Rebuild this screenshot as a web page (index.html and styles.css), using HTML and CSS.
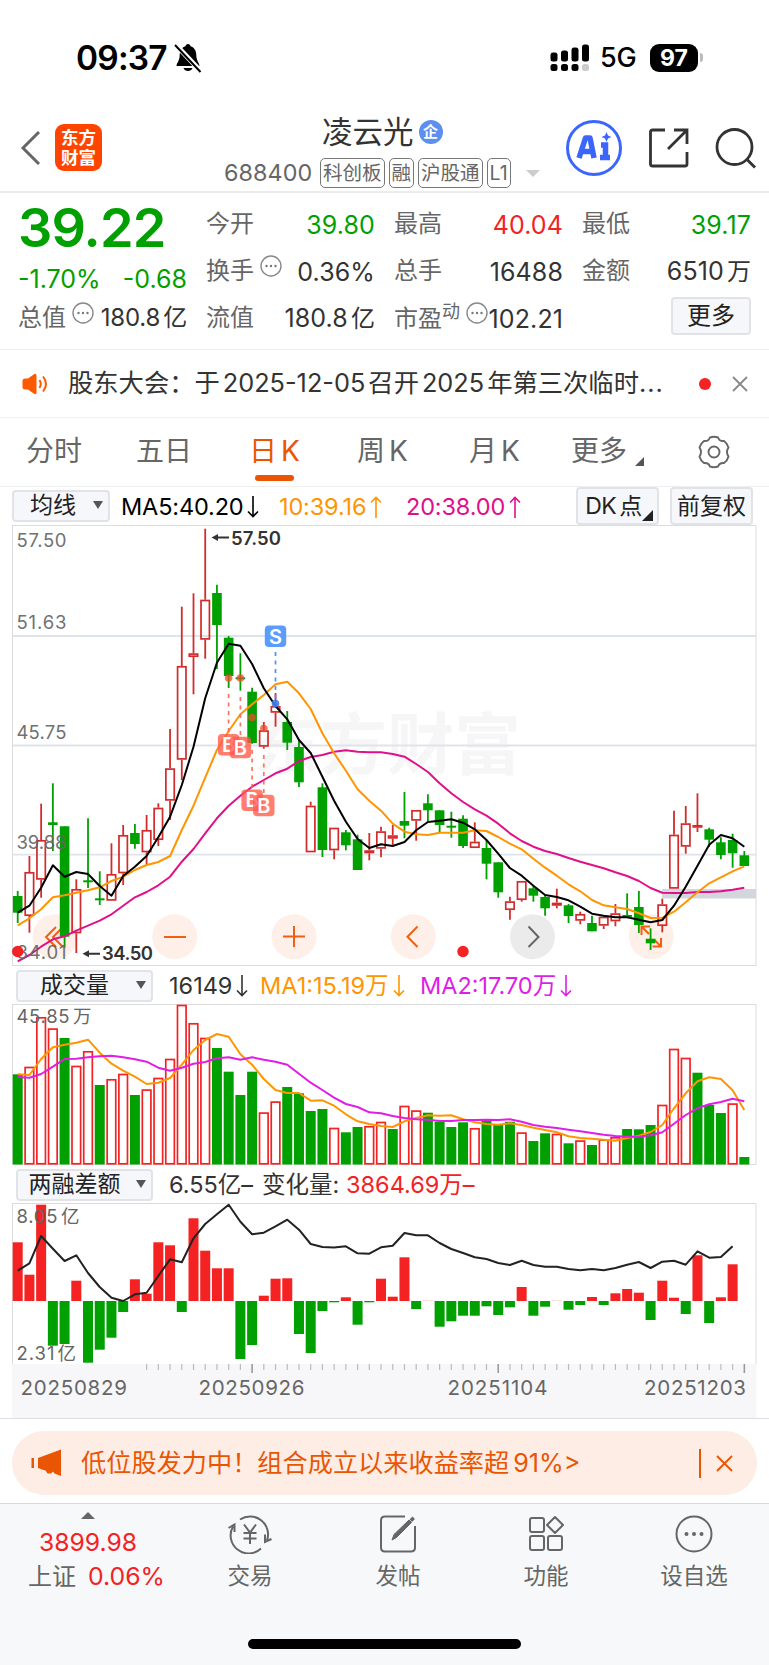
FILE: index.html
```
<!DOCTYPE html>
<html lang="zh-CN">
<head>
  <meta charset="UTF-8">
  <meta name="viewport" content="width=device-width, initial-scale=1">
  <title>凌云光 688400</title>
  <link rel="stylesheet" href="styles.css">
</head>
<body>
  <!-- shared icons -->
  <svg class="defs" width="0" height="0">
    <symbol id="down" viewBox="0 0 12 22"><path d="M6 0V20M1 15.5L6 20.5L11 15.5" fill="none" stroke="currentColor" stroke-width="1.6"/></symbol>
    <symbol id="up" viewBox="0 0 12 22"><path d="M6 22V2M1 6.5L6 1.5L11 6.5" fill="none" stroke="currentColor" stroke-width="1.6"/></symbol>
    <symbol id="dots" viewBox="0 0 22 22"><circle cx="11" cy="11" r="10" fill="none" stroke="#888" stroke-width="1.4"/><circle cx="6.5" cy="11" r="1.2" fill="#777"/><circle cx="11" cy="11" r="1.2" fill="#777"/><circle cx="15.5" cy="11" r="1.2" fill="#777"/></symbol>
  </svg>

  <header class="status">
    <span class="time">09:37</span>
    <svg class="bell" width="28" height="30" viewBox="0 0 28 30">
      <path d="M14 1C15.500 1 16.300 2 16.500 3.200C20.500 4.500 22.300 8 22.300 12C22.300 18 25.500 20 25.500 23H2.500C2.500 20 5.700 18 5.700 12C5.700 8 7.500 4.500 11.500 3.200C11.700 2 12.500 1 14 1Z M9.500 25H18.500C17.500 29 10.500 29 9.500 25Z" fill="#000"/>
      <path d="M1.500 1.500L27 28.500" stroke="#fff" stroke-width="5"/>
      <path d="M1 2L26.500 29" stroke="#000" stroke-width="2"/>
    </svg>
    <svg class="signal" width="40" height="28" viewBox="0 0 40 28">
      <g fill="#000">
        <rect x="0.500" y="8.500" width="7" height="9" rx="2.500"/><rect x="11" y="6.500" width="7" height="11" rx="2.500"/><rect x="21.500" y="3.500" width="7" height="14" rx="2.500"/><rect x="32" y="0.500" width="7" height="17" rx="2.500"/>
        <rect x="0.500" y="20" width="7" height="7" rx="2.500"/><rect x="11" y="20" width="7" height="7" rx="2.500"/><rect x="21.500" y="20" width="7" height="7" rx="2.500"/>
      </g>
      <rect x="32" y="20" width="7" height="7" rx="2.500" fill="#ccc"/>
    </svg>
    <span class="net">5G</span>
    <span class="battery">97</span>
    <i class="nub"></i>
  </header>

  <nav class="nav">
    <svg class="back" width="22" height="36" viewBox="0 0 22 36"><path d="M19 2L3 18L19 34" fill="none" stroke="#666" stroke-width="3"/></svg>
    <div class="brand">东方<br>财富</div>
    <div class="heading">
      <div class="title">凌云光<span class="badge">企</span></div>
      <div class="sub">
        <span class="code">688400</span>
        <span class="tag">科创板</span><span class="tag">融</span><span class="tag">沪股通</span><span class="tag">L1</span>
        <i class="caret"></i>
      </div>
    </div>
    <div class="ai">
      <svg width="58" height="58" viewBox="0 0 58 58">
        <circle cx="29" cy="29" r="26.500" fill="none" stroke="#3b66fb" stroke-width="3"/>
        <path d="M14 39L20.500 19H25L29 39M17 32.500H27" fill="none" stroke="#3b66fb" stroke-width="5.500" stroke-linejoin="round"/>
        <path d="M36 26H40.500V39M35 38.500H45" fill="none" stroke="#3b66fb" stroke-width="5.500"/>
        <path d="M41.500 13L43 16.500L46.500 18L43 19.500L41.500 23L40 19.500L36.500 18L40 16.500Z" fill="#3b66fb"/>
      </svg>
    </div>
    <svg class="share" width="42" height="42" viewBox="0 0 42 42"><path d="M17 3H4.500Q2.500 3 2.500 5V37Q2.500 39 4.500 39H37Q39 39 39 37V25M26 3H39V17M38.500 3.500L20 22" fill="none" stroke="#333" stroke-width="2.800"/></svg>
    <svg class="search" width="42" height="42" viewBox="0 0 42 42"><circle cx="19.500" cy="20" r="17.500" fill="none" stroke="#333" stroke-width="2.800"/><path d="M32 32.500L40 40.500" stroke="#333" stroke-width="2.800"/></svg>
  </nav>

  <section class="quote">
    <div class="col main">
      <div class="price">39.22</div>
      <div class="pair change"><span>-1.70%</span><span>-0.68</span></div>
      <div class="pair total"><label>总值</label><svg class="more-dot"><use href="#dots"/></svg><b>180.8<em>亿</em></b></div>
    </div>
    <div class="col">
      <div class="pair"><label>今开</label><b class="green">39.80</b></div>
      <div class="pair"><label>换手</label><svg class="more-dot"><use href="#dots"/></svg><b>0.36%</b></div>
      <div class="pair"><label>流值</label><b>180.8<em>亿</em></b></div>
    </div>
    <div class="col">
      <div class="pair"><label>最高</label><b class="red">40.04</b></div>
      <div class="pair"><label>总手</label><b>16488</b></div>
      <div class="pair"><label>市盈<sup>动</sup></label><svg class="more-dot pe"><use href="#dots"/></svg><b>102.21</b></div>
    </div>
    <div class="col">
      <div class="pair"><label>最低</label><b class="green">39.17</b></div>
      <div class="pair"><label>金额</label><b>6510<em>万</em></b></div>
      <div class="pair"><button class="more">更多</button></div>
    </div>
  </section>

  <section class="news">
    <svg width="28" height="24" viewBox="0 0 28 24"><path d="M0.500 9Q0.500 6.500 3 6.500H6L12 2.200Q14.500 1 14.500 3.500V20.500Q14.500 23 12 21.800L6 17.500H3Q0.500 17.500 0.500 15Z" fill="#ff5a00"/><path d="M17.500 8Q20 12 17.500 16M21 4.500Q27 12 21 19.500" fill="none" stroke="#ff5a00" stroke-width="2"/></svg>
    <p>股东大会：于<em>2025-12-05</em>召开<em>2025</em>年第三次临时<span>...</span></p>
    <i class="dot"></i>
    <svg class="close" width="16" height="16" viewBox="0 0 16 16"><path d="M1 1L15 15M15 1L1 15" stroke="#888" stroke-width="1.800"/></svg>
  </section>

  <section class="tabs">
    <span class="t1">分时</span><span class="t2">五日</span><span class="t3 active">日<em>K</em></span><span class="t4">周<em>K</em></span><span class="t5">月<em>K</em></span><span class="t6">更多</span><i class="corner"></i>
    <svg class="gear" width="34" height="34" viewBox="0 0 34 34"><path d="M13 2.500Q17 1 21 2.500Q22.500 6.500 27 6Q30.500 8.500 31.500 12.500Q28.500 17 31.500 21.500Q30.500 25.500 27 28Q22.500 27.500 21 31.500Q17 33 13 31.500Q11.500 27.500 7 28Q3.500 25.500 2.500 21.500Q5.500 17 2.500 12.500Q3.500 8.500 7 6Q11.500 6.500 13 2.500Z" fill="none" stroke="#666" stroke-width="1.900"/><circle cx="17" cy="17" r="5.500" fill="none" stroke="#666" stroke-width="1.900"/></svg>
  </section>

  <section class="ma">
    <button class="pick pick-ma">均线<i></i></button>
    <span class="m5">MA5:40.20<svg><use href="#down"/></svg></span>
    <span class="m10">10:39.16<svg><use href="#up"/></svg></span>
    <span class="m20">20:38.00<svg><use href="#up"/></svg></span>
    <button class="opt dk">DK<em>点</em><i></i></button>
    <button class="opt">前复权</button>
  </section>
  <svg id="kline" class="chart" width="745" height="441" viewBox="12 525 745 441"></svg>

  <section class="ind">
    <button class="pick">成交量<i></i></button>
    <span class="v0">16149<svg><use href="#down"/></svg></span>
    <span class="v1">MA1:15.19万<svg><use href="#down"/></svg></span>
    <span class="v2">MA2:17.70万<svg><use href="#down"/></svg></span>
  </section>
  <svg id="volume" class="chart" width="745" height="161" viewBox="12 1004 745 161"></svg>

  <section class="ind">
    <button class="pick">两融差额<i></i></button>
    <span class="r0">6.55亿–</span>
    <span class="r1">变化量:</span>
    <span class="r2">3864.69万–</span>
  </section>
  <svg id="margin" class="chart" width="745" height="215" viewBox="12 1203 745 215"></svg>

  <section class="promo">
    <div class="pill">
      <svg width="32" height="28" viewBox="0 0 32 28"><path d="M7 9L30 0.500V27L23.500 24.500L22 22.500L20 24.500H16.500L14.500 21.500L11 20.500L7 19ZM0.500 9H3V19H0.500Z" fill="#ea5504"/></svg>
      <p>低位股发力中！组合成立以来收益率超<em>91%&gt;</em></p>
      <i class="bar"></i>
      <svg class="close" width="17" height="17" viewBox="0 0 17 17"><path d="M1 1L16 16M16 1L1 16" stroke="#ea5504" stroke-width="1.800"/></svg>
    </div>
  </section>

  <footer class="bottom">
    <div class="index">
      <i></i>
      <b>3899.98</b>
      <p>上证<em>0.06%</em></p>
    </div>
    <div class="item">
      <svg width="44" height="40" viewBox="0 0 44 40" fill="none" stroke="#666" stroke-width="2"><path d="M12 5.500A18 18 0 0 1 39 26.500M43.500 25L37 28V20.500M33 34.500A18 18 0 0 1 5 12.500M0.500 14L6.500 10.500V18"/><path d="M16 10.500L22 18.500L28 10.500M22 18.500V30M15.500 19H28.500M15.500 24.500H28.500"/></svg>
      <span>交易</span>
    </div>
    <div class="item">
      <svg width="40" height="40" viewBox="0 0 40 40" fill="none" stroke="#666" stroke-width="2"><path d="M27 2.500H7Q3 2.500 3 6.500V33.500Q3 37.500 7 37.500H33Q37 37.500 37 33.500V12"/><path d="M14 26L16 20.500L31 6L33.500 8.500L18.500 23.500Z" fill="#666" stroke-width="1"/><path d="M33 4L35.500 6.500" stroke-width="4"/></svg>
      <span>发帖</span>
    </div>
    <div class="item">
      <svg width="40" height="40" viewBox="0 0 40 40" fill="none" stroke="#666" stroke-width="2"><rect x="4" y="4" width="14" height="14" rx="2"/><rect x="4" y="22" width="14" height="14" rx="2"/><rect x="22" y="22" width="14" height="14" rx="2"/><path d="M29 3L37 11L29 19L21 11Z" stroke-linejoin="round"/></svg>
      <span>功能</span>
    </div>
    <div class="item">
      <svg width="40" height="40" viewBox="0 0 40 40"><circle cx="20" cy="20" r="17.500" fill="none" stroke="#666" stroke-width="2"/><g fill="#666"><circle cx="12.500" cy="20" r="2"/><circle cx="20" cy="20" r="2"/><circle cx="27.500" cy="20" r="2"/></g></svg>
      <span>设自选</span>
    </div>
    <div class="home"></div>
  </footer>
  <script src="chart.js"></script>
</body>
</html>
```
FILE: styles.css
```
* {
  margin: 0;
  padding: 0;
  box-sizing: border-box;
}
body {
  width: 769px;
  height: 1665px;
  overflow: hidden;
  background: #fff;
  color: #333;
  font-family: Inter, "Noto Sans CJK SC", sans-serif;
  font-size: 24px;
  line-height: 1.2;
  white-space: nowrap;
}
em, i, b {
  font-style: normal;
  font-weight: 400;
}
svg {
  display: block;
  flex: none;
}
.defs {
  position: absolute;
}
button {
  font: inherit;
  color: #222;
  background: #f6f7fa;
  border: 2px solid #e1e3e8;
  border-radius: 4px;
}

/* status bar */
.status {
  display: flex;
  align-items: center;
  height: 96px;
  padding: 19px 0 0 76px;
  color: #000;
}
.time {
  width: 97px;
  padding-top: 2px;
  font-size: 33.500px;
  font-weight: 600;
  letter-spacing: -0.8px;
}
.bell { margin-left: 1px; }
.signal { margin-left: 348px; }
.net {
  width: 48px;
  margin-left: 10px;
  padding-top: 2px;
  font-size: 27px;
  font-weight: 500;
  letter-spacing: -0.3px;
}
.battery {
  width: 48px;
  height: 28px;
  margin-left: 2px;
  border-radius: 9px;
  background: #000;
  color: #fff;
  font-size: 23px;
  font-weight: 700;
  line-height: 28px;
  text-align: center;
}
.nub {
  width: 3px;
  height: 9px;
  margin-left: 2px;
  border-radius: 0 3px 3px 0;
  background: #bbb;
}

/* title bar */
.nav {
  display: flex;
  align-items: flex-start;
  height: 97px;
  border-bottom: 2px solid #ededed;
}
.back { margin: 34px 0 0 20px; }
.brand {
  width: 47px;
  height: 47px;
  margin: 28px 0 0 13px;
  padding-top: 4px;
  border-radius: 9px;
  background: #ff4400;
  color: #fff;
  font-size: 17.500px;
  font-weight: 700;
  line-height: 19.500px;
  text-align: center;
}
.heading {
  width: 320px;
  margin: 16px 0 0 122px;
}
.title {
  display: flex;
  align-items: center;
  height: 40px;
  padding-left: 98px;
  font-size: 30.500px;
}
.badge {
  width: 24px;
  height: 24px;
  margin-left: 5px;
  border-radius: 50%;
  background: #5d8ff0;
  color: #fff;
  font-size: 15px;
  font-weight: 700;
  line-height: 23px;
  text-align: center;
}
.sub {
  display: flex;
  align-items: center;
  height: 30px;
  margin-top: 6px;
  color: #666;
}
.code {
  width: 96px;
  font-size: 23.300px;
  letter-spacing: 0.1px;
}
.tag {
  height: 30px;
  margin-right: 4px;
  padding: 0 2px;
  border: 1.500px solid #777;
  border-radius: 5px;
  font-size: 19.500px;
  line-height: 28px;
}
.caret {
  margin-left: 11px;
  border: 7px solid transparent;
  border-top: 7px solid #ccc;
  border-bottom: 0;
}
.ai { margin: 23px 0 0 21px; }
.share { margin: 31px 0 0 25px; }
.search { margin: 31px 0 0 25px; }

/* quote numbers */
.quote {
  display: flex;
  gap: 19px;
  height: 157px;
  padding: 8px 0 0 18px;
  border-bottom: 1px solid #eee;
}
.col {
  display: flex;
  flex-direction: column;
  width: 169px;
}
.pair {
  display: flex;
  align-items: center;
  justify-content: space-between;
  height: 47px;
}
.pair b {
  color: #333;
  font-size: 25px;
  letter-spacing: 0.1px;
}
.pair label { color: #666; }
.pair em {
  margin-left: 3px;
  font-size: 24px;
}
.total b {
  font-size: 24px;
  letter-spacing: -0.2px;
}
.pair .green { color: #00a000; }
.pair .red { color: #f42222; }
.main .price {
  height: 61px;
  color: #00a000;
  font-size: 54px;
  font-weight: 600;
  letter-spacing: -0.9px;
  line-height: 54px;
}
.main .change {
  height: 33px;
  color: #00a000;
  font-size: 25px;
}
.pair .more-dot {
  width: 22px;
  height: 22px;
  margin: -11px auto 0 6px;
}
.pair .more-dot.pe { margin: -11px -6px 0 0; }
.pair sup {
  font-size: 18px;
  line-height: 1;
  vertical-align: 9px;
}
.more {
  width: 80px;
  height: 38px;
  margin: -6px 0 0 auto;
  line-height: 34px;
}

/* notice */
.news {
  display: flex;
  align-items: center;
  height: 68px;
  padding-left: 22px;
  border-bottom: 1px solid #f0f0f0;
}
.news p {
  width: 616px;
  margin-left: 18px;
  font-size: 25.300px;
}
.news em { margin: 0 3px; }
.news p span { letter-spacing: 1px; }
.dot {
  width: 12px;
  height: 12px;
  margin-left: 15px;
  border-radius: 50%;
  background: #f42222;
}
.news .close { margin-left: 21px; }

/* period tabs */
.tabs {
  display: flex;
  align-items: center;
  height: 69px;
  padding-left: 26px;
  border-bottom: 1px solid #eee;
  color: #666;
  font-size: 28px;
}
.tabs em { margin-left: 4px; }
.t1, .t2 { width: 110px; }
.t3 { width: 108px; }
.t4 { width: 112px; }
.t5 { width: 106px; }
.t2 { margin-right: 3px; }
.t5 { margin-right: -4px; }
.t6 { margin-right: 8px; }
.tabs .active {
  position: relative;
  color: #ea5504;
}
.active::after {
  content: "";
  position: absolute;
  left: 6px;
  bottom: -12px;
  width: 39px;
  height: 6px;
  border-radius: 3px;
  background: #ea5504;
}
.corner {
  margin-top: 18px;
  border-bottom: 9px solid #555;
  border-left: 9px solid transparent;
}
.gear { margin-left: 53px; }

/* moving averages */
.ma, .ind {
  display: flex;
  align-items: center;
  height: 38px;
  font-size: 23.500px;
}
.ma { padding-left: 12px; }
.ind {
  padding-top: 2px;
  padding-left: 16px;
}
.ma span, .ind span {
  display: flex;
  align-items: center;
  flex: none;
}
.ma span {
  padding-top: 2px;
  letter-spacing: -0.15px;
}
.ma span svg, .ind span svg {
  width: 12px;
  height: 22px;
  margin-left: 4px;
}
.pick {
  display: flex;
  align-items: center;
  justify-content: center;
  flex: none;
  position: relative;
  width: 137px;
  height: 32px;
  padding-right: 20px;
  font-size: 23px;
}
.pick i {
  position: absolute;
  right: 5px;
  top: 9px;
  border: 5px solid transparent;
  border-top: 8px solid #555;
  border-bottom: 0;
}
.pick-ma {
  justify-content: flex-start;
  width: 98px;
  padding-right: 0;
  padding-left: 16px;
}
.m5 { width: 158px; margin-left: 11px; color: #000; }
.m10 { width: 127px; color: #ff9500; }
.m20 { width: 170px; color: #e0108a; }
.opt {
  position: relative;
  flex: none;
  width: 83px;
  height: 38px;
  margin-right: 11px;
  font-size: 23px;
  line-height: 35px;
}
.dk {
  padding-right: 8px;
  letter-spacing: -0.5px;
}
.dk em { margin-left: 3px; }
.dk i {
  position: absolute;
  right: 4px;
  bottom: 2px;
  border-bottom: 11px solid #222;
  border-left: 11px solid transparent;
}
.v0 { width: 91px; margin-left: 16px; }
.v1 { width: 160px; color: #ff9500; }
.v2 { color: #e01ee6; }
.r0 { width: 93px; margin-left: 16px; }
.r1 { width: 84px; }
.r2 { color: #f42222; }

.chart {
  margin-left: 12px;
  font-family: Inter, "Noto Sans CJK SC", sans-serif;
}

/* promo strip */
.promo {
  height: 85px;
  padding: 12px 12px 0;
  border-top: 1px solid #dcdee1;
}
.pill {
  display: flex;
  align-items: center;
  height: 64px;
  padding-left: 19px;
  border-radius: 32px;
  background: #fdede4;
  color: #ea5504;
}
.pill p {
  width: 618px;
  margin-left: 18px;
  font-size: 25.200px;
}
.pill em { margin-left: 4px; }
.pill .bar {
  width: 2px;
  height: 29px;
  background: #ea5504;
}
.pill .close { margin-left: 15px; }

/* bottom bar */
.bottom {
  position: relative;
  display: flex;
  height: 162px;
  border-top: 1px solid #d5d7da;
  background: #f6f8fa;
  color: #666;
}
.index {
  display: flex;
  flex-direction: column;
  align-items: center;
  width: 176px;
  padding-top: 8px;
}
.index i {
  border: 7px solid transparent;
  border-top: 0;
  border-bottom: 7px solid #666;
}
.index b {
  margin-top: 9px;
  color: #f42222;
  font-size: 24.700px;
}
.index p {
  margin-top: 4px;
  margin-left: 17px;
}
.index em {
  margin-left: 12px;
  color: #f42222;
  font-size: 24.800px;
}
.item {
  display: flex;
  flex-direction: column;
  align-items: center;
  width: 148px;
  padding-top: 10px;
  font-size: 22.500px;
}
.item span { margin-top: 8px; }
.home {
  position: absolute;
  left: 248px;
  bottom: 16px;
  width: 273px;
  height: 10px;
  border-radius: 5px;
  background: #000;
}
```
FILE: chart.js
```
const GREEN = "#00a000";
const RED = "#d22b2b";
const BRIGHT = "#f42222";
const GREY = "#666";
const X0 = 17.7;
const STEP = 11.72;
const x = i => X0 + i * STEP;

// direction, high, body top, body bottom, low
const candles = [
  ["g",891,896,912.7,923],["r",856,872,916,932.7],["r",803.7,840,879.7,897.7],["g",783.3,822.3,825,851],
  ["g",826.3,826.3,936.7,947.7],["r",879.3,889,933.3,953],["g",818.3,880.3,882.3,888],["g",871.3,898.3,900,905],
  ["r",843.3,874,900.7,900.7],["r",825,835,873.3,885],["g",824,833,844,848.7],["r",815,830,852.3,865],
  ["r",803.3,807.7,840,846],["r",729,768.3,800.7,820],["r",606.7,666,759.7,780],["r",593.3,653.3,657,694.3],
  ["r",528.7,599.7,639.7,658.7],["g",584.7,593,625,669],["g",636,637.7,676,688],["g",653.3,677.3,679,690.7],
  ["g",687.7,691.7,743,743.7],["r",722,730.3,746.7,748.7],["r",693,706,712.7,726.7],["g",711,722,742.7,750],
  ["g",740,747,782.3,787],["r",801.7,805.7,852.3,852.3],["g",783.3,787.3,850,857],["r",827.7,827.7,850.3,859.3],
  ["g",830,832.3,845.3,850.3],["g",834.7,839.3,870,870],["r",833,850.3,853.3,860.3],["r",826.7,831.3,848.7,857.3],
  ["r",825,835.3,838.7,846],["g",792,821,825.7,838.3],["r",810,810,820.7,840.7],["g",794.3,803.3,810.3,821.7],
  ["g",810.3,810.3,825,832.3],["g",811.7,825.7,827.3,837.7],["g",815.3,818.7,846,848],["r",822.3,841.7,848,848],
  ["g",840,848,863.7,879.3],["g",862.3,862.3,892.3,897.7],["r",896.7,901.3,910,919.7],["r",881,881,900,901.7],
  ["g",886,888.3,895.7,901.7],["g",895,897,908.3,915.7],["r",888.7,902.7,905.7,908.3],["g",904,905.3,916,923],
  ["r",911.7,914,920.7,924.3],["g",915.7,923,931.3,931.3],["r",915,916.7,925.7,929],["r",904,913.3,921.3,926.3],
  ["g",893.3,915,916.7,917],["g",891,907,925,933],["g",928.3,938.7,943.3,950],["r",898.7,904.3,926,932.3],
  ["r",810.7,834.7,888.7,888.7],["r",806,823.3,846.7,853.7],["r",793.3,825,827.7,832],["g",827.7,829.3,839.7,847],
  ["g",837.3,842.3,855,859.3],["g",833.7,840,853.3,867.7],["g",851,855.3,866,866]
];
const ma5 = [912.7,905.7,887.7,865.3,876.7,872,874,886,895.7,876,866.7,856,837.3,816.7,785,746.7,698.3,662.7,643.7,645.7,664,688.3,706,719.3,740,753,776.7,800.7,821.7,839,848,844.3,846,842,830.3,822,820.7,819.3,822.7,829.3,840,853.7,868,875.7,885.7,895,897,900.3,906.7,913.7,915.7,917.3,917.3,919.7,922.3,920,905.7,886.7,865.7,844.7,835,838.3,846.7];
const ma10 = [925.3,918.3,909.3,897.3,895.3,892.7,890.3,887.3,881,876.7,870,865,862,856,830,805.7,777.7,750,731,714.3,704.3,695,684.3,681.7,693.3,709,733.3,753.3,770.7,789.3,800.7,810.7,823.7,831.7,834.3,835,832.7,832.7,832.7,830.3,831,837,843.7,849.3,858.7,867.7,875.7,884.3,891.3,900,905.3,907.3,909,913.3,918,917.7,911.7,902.3,892.3,883.3,877.3,871.3,866.3];
const ma20 = [961.3,955,946.7,939.3,936.3,930.7,925.7,920.7,914.3,905.7,897.3,892,885.3,876.7,861.7,849,833.3,818.3,805.7,795.7,786.7,780,773.3,768.7,761,757,755,751.7,750.3,751.7,752.3,752.3,754,756.7,764,772,783.3,793.3,802,809.3,815.7,823.7,833.3,841,846.7,851,854,858,861.7,865,868.3,872.3,876,881,888,892.7,893,893,892,892,891.3,889.7,887.7];

const volTop = [1074.3,1066.7,1017,1028.3,1038,1065.7,1051,1085,1079,1073.7,1095,1089.3,1077.7,1058.7,1004.7,1023,1037.7,1048,1071.7,1095,1071.7,1112.3,1101.3,1087,1093.3,1111,1109,1127.7,1132.3,1127,1126,1121.7,1129,1105.7,1110.3,1112.7,1121.7,1127,1122.3,1128,1120.7,1125,1121.7,1132.3,1141,1133.3,1133.7,1143.3,1140.3,1145,1139.3,1137,1129,1129.3,1125,1104.7,1048.7,1057.7,1072.7,1105,1113,1103.3,1157];
const volDir = "grrrgrrgrrgrrrrrrggggrrggggrggrrgrrggggrgggrggrgrgrrgggrrrgggrg";
const vma1 = [1074.3,1075,1059,1047.3,1044.7,1042.7,1039.7,1052.7,1063.7,1070.7,1076.7,1084,1082.7,1078,1064.7,1050,1040,1034,1036.7,1054.3,1064.7,1079,1090,1093,1093,1100.7,1100.3,1105.7,1114.3,1121.3,1124,1126,1127,1121.3,1118,1115.3,1115.7,1115.3,1119.3,1122.3,1124,1124.7,1123.3,1125,1127.7,1130,1132.3,1136.3,1138,1138.7,1139.7,1140.7,1138,1135.7,1132,1125,1108.3,1093.3,1081.3,1077.3,1079,1090.3,1110];
const vma2 = [1077,1077.7,1074,1066.7,1059,1058.7,1057.3,1056.3,1055.7,1057.3,1059.3,1061.7,1067.7,1070.7,1067.7,1063.7,1062,1058.3,1057.3,1059.7,1057.3,1059.7,1061.7,1064.7,1073.7,1082.7,1090,1097.7,1104,1107,1112.3,1113.3,1116,1118,1119.3,1119.7,1121,1121,1120,1120,1119.7,1120,1119.3,1121.7,1125,1126.7,1128,1129.7,1131.3,1133,1134.7,1136,1136.7,1136.7,1135.3,1132.3,1123.7,1115,1108.3,1104.3,1102,1098.7,1101.3];

const diff = [1242.3,1274.7,1204.7,1345.7,1344,1280.7,1362.7,1349.7,1337.7,1312,1279.3,1293.7,1242.3,1245.3,1312,1218.3,1250.7,1268.3,1268.3,1359,1345,1295.7,1278.7,1278.3,1334,1353,1311,1302.3,1297.3,1324.7,1302.3,1278.7,1296.7,1257.3,1309,1300.5,1326.7,1321.3,1315.7,1315.7,1306.3,1315,1307.3,1287,1315.7,1306.7,1300.5,1309.7,1305,1297,1305,1293.3,1289,1292.7,1320,1280.7,1297.7,1314,1255.3,1323,1297.3,1264.3];
const balance = [1270.7,1263.3,1236,1248.7,1261,1255.3,1273,1287,1297.7,1301,1294.3,1292.7,1276,1259.3,1262.3,1238.3,1224,1214.3,1204.7,1221.7,1234.3,1232.7,1226.3,1219.7,1229.7,1244,1247,1247.5,1246.3,1253.3,1253.7,1247.3,1245.7,1233,1235.3,1235.3,1243,1249,1253,1257.3,1259,1263,1265,1260.7,1265,1266.7,1266.7,1269,1270.3,1269,1270.3,1268,1264.7,1262,1268,1261.7,1260.7,1264.7,1251.3,1257.7,1257,1246.3];

const rect = (l, t, w, h, fill, extra = "") => `<rect x="${l}" y="${t}" width="${w}" height="${h}" fill="${fill}" ${extra}/>`;
const seg = (x1, y1, x2, y2, color, w = 1.8, extra = "") => `<path d="M${x1} ${y1}L${x2} ${y2}" stroke="${color}" stroke-width="${w}" fill="none" ${extra}/>`;
const line = (ys, color) => `<polyline points="${ys.map((y, i) => x(i).toFixed(1) + "," + y).join(" ")}" fill="none" stroke="${color}" stroke-width="2" stroke-linejoin="round"/>`;
const text = (l, y, s, size, len, extra = `fill="${GREY}"`) => `<text x="${l}" y="${y}" font-size="${size}" textLength="${len}" ${extra}>${s}</text>`;
const frame = (t, h) => rect(12.5, t + 0.5, 743.5, h - 1, "none", 'stroke="#dcdcde"');

function drawKline() {
  let s = text(253, 769, "东方财富", 67, 268, 'fill="#f6f6f6" font-weight="700"');
  s += [636, 745.5, 854.7].map(y => seg(12, y, 756, y, "#dfe3ea")).join("");
  s += frame(525, 441);
  s += rect(662, 889, 94, 9.5, "#d3d7dd");
  // round chart controls
  [55, 174.7, 294, 413.3, 532.5, 651.3].forEach((cx, i) => {
    s += `<circle cx="${cx}" cy="936.7" r="22.500" fill="${i == 4 ? "#ebebeb" : "#fef0e8"}"/>`;
  });
  s += `<g fill="none" stroke="#f06010" stroke-width="2">
    <path d="M56 927L46 937L56 947M63 927L53 937L63 947"/>
    <path d="M164 937H186M283 936.500H305M294 926V947M417.500 926.500L407.500 936.700L417.500 947"/>
    <path d="M641.500 935V926.500H650M642 927L649 934M661 938V946.500H652.500M661 946.500L654 939.500"/>
    <path d="M528.500 926.500L538.500 937L528.500 947" stroke="#666"/></g>`;
  candles.forEach(([d, hi, top, bot, lo], i) => {
    const cx = x(i);
    if (d == "g") {
      s += seg(cx, hi, cx, lo, GREEN) + rect(cx - 4.8, top, 9.6, Math.max(bot - top, 2), GREEN);
    } else {
      s += seg(cx, hi, cx, top, RED) + seg(cx, bot, cx, lo, RED);
      s += rect(cx - 4.2, top + 0.8, 8.4, Math.max(bot - top - 1.6, 1), "none", `stroke="${RED}" stroke-width="1.7"`);
    }
  });
  s += line(ma20, "#e0108a") + line(ma10, "#ff9500") + line(ma5, "#000");
  // buy and sell marks
  [[228.6, 678, 694, 744.8], [240.4, 678, 697, 747.5], [252.1, 717.5, 750, 800.3], [263.8, 728.5, 755, 805.5]].forEach(([cx, dot, from, cy]) => {
    s += seg(cx, from, cx, cy - 10, "#ff6450", 1.7, 'stroke-dasharray="4 4.500" opacity=".9"');
    s += `<circle cx="${cx}" cy="${dot}" r="3.8" fill="#f04a28" opacity=".75"/>`;
    s += rect(cx - 10.7, cy - 10.7, 21.4, 21.4, "#ff5a46", 'rx="4" opacity=".78"');
    s += `<text x="${cx}" y="${cy + 7}" font-size="20" font-weight="600" text-anchor="middle" fill="#fff">B</text>`;
  });
  s += seg(275.5, 652, 275.5, 700, "#4a90ff", 1.7, 'stroke-dasharray="4 4.500"');
  s += '<circle cx="275.5" cy="703.5" r="3.8" fill="#3a7ef0" opacity=".9"/>';
  s += rect(264.8, 625.6, 21.4, 21.4, "#5b9dff", 'rx="4"');
  s += '<text x="275.5" y="643.500" font-size="20" font-weight="600" text-anchor="middle" fill="#fff">S</text>';
  // price scale
  [["57.50", 546.5], ["51.63", 629], ["45.75", 739], ["39.88", 848.5], ["34.01", 958.5]].forEach(([t, y]) => {
    s += text(16.5, y, t, 18.5, 50, 'fill="#666" opacity=".92"');
  });
  const bold = 'fill="#333" font-weight="600"';
  s += text(231, 544.5, "57.50", 18.5, 50, bold) + text(102, 960, "34.50", 18.5, 51, bold);
  s += '<path d="M215 537.500H229M86 953.700H100" stroke="#333" stroke-width="2"/><path d="M211.500 537.500L218 534V541ZM82.500 953.700L89 950.200V957.200Z" fill="#333"/>';
  s += `<circle cx="17.700" cy="951.500" r="5.700" fill="${BRIGHT}"/><circle cx="463" cy="951.500" r="5.700" fill="${BRIGHT}"/>`;
  return s;
}

function drawVolume() {
  let s = frame(1004, 161);
  volTop.forEach((t, i) => {
    const cx = x(i);
    s += volDir[i] == "g"
      ? rect(cx - 5, t, 10, 1164.5 - t, GREEN)
      : rect(cx - 4.3, t + 0.8, 8.6, 1163 - t, "#fff", `stroke="${BRIGHT}" stroke-width="1.7"`);
  });
  s += line(vma1, "#ff9500") + line(vma2, "#e01ee6");
  return s + text(16.5, 1023, "45.85", 18.5, 53) + text(73, 1023, "万", 18.5, 18);
}

function drawMargin() {
  let s = rect(12, 1364, 744.5, 54, "#f7f7fa");
  s += '<path d="M12.500 1364V1203.500H756V1364" fill="none" stroke="#dcdcde"/>';
  diff.forEach((y, i) => {
    s += y < 1301
      ? rect(x(i) - 5, y, 10, 1301 - y, 1301 - y < 1 ? "#fbb" : BRIGHT)
      : rect(x(i) - 5, 1301, 10, y - 1301, GREEN);
  });
  s += line(balance, "#222");
  s += text(16.5, 1222.5, "8.05", 18.5, 41) + text(61, 1222.5, "亿", 18.5, 18);
  s += text(16.5, 1359.5, "2.31", 18.5, 38) + text(57.5, 1359.5, "亿", 18.5, 18);
  for (let i = 11; i < 63; i++) {
    const major = i == 20 || i == 41 || i == 62;
    s += seg(x(i), 1364, x(i), major ? 1373 : 1370, major ? "#999" : "#bbb", major ? 1.6 : 1.2);
  }
  [["20250829", 20.5, 106.5], ["20250926", 198.5, 106], ["20251104", 447.5, 100], ["20251203", 644, 102]].forEach(([t, l, len]) => {
    s += text(l, 1394.5, t, 20.5, len);
  });
  return s;
}

document.getElementById("kline").innerHTML = drawKline();
document.getElementById("volume").innerHTML = drawVolume();
document.getElementById("margin").innerHTML = drawMargin();
```
